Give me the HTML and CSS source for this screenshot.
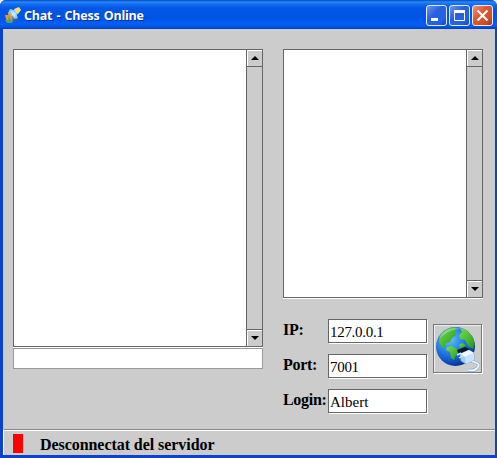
FILE: index.html
```html
<!DOCTYPE html>
<html lang="ca">
<head>
<meta charset="utf-8">
<title>Chat - Chess Online</title>
<link rel="stylesheet" href="styles.css">
</head>
<body>
<div class="window">
  <header class="titlebar">
    <svg class="app-icon" width="18" height="18" viewBox="0 0 18 18">
      <path d="M4 7L6 3l4 1 3-2 2 3-2 4 1 4-3 1-3-4-3 1z" fill="#8bcdf0"/>
      <path d="M10 3l5-2 2 3-3 4-2-2z" fill="#f4df73"/>
      <path d="M7 5l5 2-1 4-3-2z" fill="#c2e7fa"/>
      <path d="M1 9l3 0 1-3 2 3 2 3-2 3-3 1-2-3z" fill="#e8963b"/>
      <path d="M1 14l3 0 1-4 2 4 3-1-2 4-5 0z" fill="#4fa568"/>
      <path d="M10 13l4-1-1 3-3 1z" fill="#375fa8"/>
    </svg>
    <h1 class="title">Chat - Chess Online</h1>
    <div class="controls">
      <button class="control" aria-label="Minimize"><svg width="21" height="21"><path d="M5 14.500h7" stroke="#fff" stroke-width="3"/></svg></button>
      <button class="control" aria-label="Maximize"><svg width="21" height="21"><path d="M5.500 6v9.500h10V6" fill="none" stroke="#fff"/><path d="M5 6.500h11" stroke="#fff" stroke-width="3"/></svg></button>
      <button class="control close" aria-label="Close"><svg width="21" height="21"><path d="M5.500 5.500l10 10m0-10l-10 10" stroke="#fff" stroke-width="2.200"/></svg></button>
    </div>
  </header>
  <main class="content">
    <section class="chat">
      <div class="pane messages">
        <div class="scrollbar">
          <span class="arrow"><svg width="8" height="4"><path d="M4 0L8 4H0z"/></svg></span>
          <span class="arrow down"><svg width="8" height="4"><path d="M0 0h8L4 4z"/></svg></span>
        </div>
      </div>
      <div class="entry"></div>
    </section>
    <section class="side">
      <div class="pane users">
        <div class="scrollbar">
          <span class="arrow"><svg width="8" height="4"><path d="M4 0L8 4H0z"/></svg></span>
          <span class="arrow down"><svg width="8" height="4"><path d="M0 0h8L4 4z"/></svg></span>
        </div>
      </div>
      <div class="connection">
        <div class="fields">
          <span class="label">IP:</span><div class="field digits">127.0.0.1</div>
          <span class="label">Port:</span><div class="field digits">7001</div>
          <span class="label">Login:</span><div class="field">Albert</div>
        </div>
        <button class="connect" aria-label="Connect">
          <svg width="48" height="48" viewBox="0 0 48 48">
            <defs>
              <radialGradient id="sea" cx=".34" cy=".3" r=".72"><stop offset="0" stop-color="#6fc4ff"/><stop offset=".35" stop-color="#3592ee"/><stop offset=".75" stop-color="#145acb"/><stop offset="1" stop-color="#08348f"/></radialGradient>
              <linearGradient id="land" x2="1" y2="1"><stop stop-color="#7cdc50"/><stop offset=".6" stop-color="#45b52f"/><stop offset="1" stop-color="#1f8a25"/></linearGradient>
              <clipPath id="ball"><circle cx="21.500" cy="21.500" r="19.500"/></clipPath>
            </defs>
            <circle cx="21.500" cy="21.500" r="19.500" fill="url(#sea)"/>
            <g clip-path="url(#ball)" fill="url(#land)">
              <path d="M5 16L7 9l7-6 8-2-1 5 1 4-4 3-2 4-5 2 1 3-3 1-3-4z"/>
              <path d="M26 3l6 1 6 6 3 8-2 6-5-3-3-6-5-1-1-4 3-3z"/>
              <path d="M13 22l5-1 5 3 2 3-3 3-2 5-3-2-1-6-4-2z"/>
              <path d="M25 20l3-2 4 2-2 2-4 1z"/>
            </g>
            <path d="M5 14C9 5 18 1 27 4 18 4 11 8 5 14z" fill="#d9f5ff" opacity=".35"/>
            <path d="M23 25l8-3 6 3-5 4-7 1z" fill="#07182a"/>
            <path d="M37 36c7 2 9 3 7 6-2 3-6 4-10 3" fill="none" stroke="#8aaed8" stroke-width="3.200"/>
            <path d="M37 36c7 2 9 3 7 6-2 3-6 4-10 3" fill="none" stroke="#eff7ff" stroke-width="1.800"/>
            <path d="M26 29l9-4 5 3 0 7-8 4-5-3z" fill="#a8cdf2" stroke="#719fd4" stroke-width=".7"/>
            <path d="M26 29l9-4 5 3-9 4z" fill="#edf8ff"/>
            <path d="M31 32l9-4v7l-8 4z" fill="#c9e3fa"/>
            <path d="M23 30l4-2m-2 5l3-2" stroke="#d7ebff" stroke-width="1.500"/>
          </svg>
        </button>
      </div>
    </section>
  </main>
  <footer class="status"><span class="light"></span><span class="status-text">Desconnectat del servidor</span></footer>
</div>
</body>
</html>
```

FILE: styles.css
```css
* { box-sizing: border-box; }
body { margin: 0; background: #f0f0ec; }
.window {
  width: 497px; height: 458px;
  display: flex; flex-direction: column;
  padding: 0 2px 3px 3px;
  background: #0b42ce;
  border-radius: 6px 6px 0 0;
  overflow: hidden;
  font-family: "Liberation Serif", serif;
  color: #000;
}
.titlebar {
  height: 29px; margin: 0 -2px 0 -3px; padding: 5px 4px 0 4px;
  display: flex; align-items: flex-start; flex: none;
  background: linear-gradient(#0647b9 0, #2688fb 2px, #1370f4 4px, #0457e4 8px, #0054e3 18px, #0260fb 24px, #0453dd 27px, #033db0 29px);
}
.app-icon { margin-top: 1px; }
.title {
  margin: 3px 0 0 2px; flex: 1;
  font: bold 13px/16px "Open Sans", sans-serif;
  font-size: 12.5px;
  letter-spacing: -.22px; word-spacing: 1.2px; color: #fff; text-shadow: 1px 1px #0a2e8c;
  white-space: nowrap;
}
.controls { display: flex; gap: 2px; }
.control {
  width: 21px; height: 21px; padding: 0;
  border: 1px solid #e4edff; border-radius: 3px;
  background: linear-gradient(135deg, #7097f3, #2960dd 40%, #2263ea 75%, #1746b5);
}
.control svg { display: block; margin: -1px; }
.close { background: linear-gradient(135deg, #ef947a, #df5731 40%, #d64c21 75%, #a73417); }
.content {
  flex: 1; display: flex; align-items: flex-start; gap: 20px;
  padding: 20px 0 0 10px;
  background: #ccc;
}
.chat { width: 250px; }
.side { width: 200px; }
.pane {
  display: flex; justify-content: flex-end;
  background: #fff; border: 1px solid #666; border-right: 0;
  box-shadow: 0 1px #fff;
}
.messages { height: 298px; }
.users { height: 249px; }
.scrollbar {
  width: 17px; display: flex; flex-direction: column; justify-content: space-between;
  background: #ccc; border: solid #666; border-width: 0 1px;
}
.arrow {
  height: 17px; display: flex; align-items: center; justify-content: center;
  border: solid #666; border-width: 0 0 1px; box-shadow: inset 1px 1px #fff;
}
.down { border-width: 1px 0 0; }
.entry {
  height: 21px; margin-top: 1px;
  background: #fff; border: 1px solid #999;
}
.connection { display: flex; padding-top: 21px; }
.fields {
  display: grid; grid-template-columns: 45px 99px; row-gap: 11px;
}
.label { font: bold 16px/22px "Liberation Serif", serif; letter-spacing: -.3px; white-space: nowrap; }
.field {
  height: 24px; padding: 2px 0 0 1px;
  background: #fff; border: 1px solid #666;
  box-shadow: 1px 1px #fff;
  font-size: 15px; line-height: 20px;
}
.digits { letter-spacing: -.3px; }
.connect {
  width: 49px; height: 49px; flex: none; margin: 5px 0 0 6px; padding: 0;
  background: #ccc; border: 1px solid #777; border-radius: 0;
  box-shadow: 1px 1px #fff, inset 1px 1px #eee;
}
.connect svg { display: block; }
.status {
  height: 26px; flex: none; display: flex; align-items: flex-start;
  padding: 4px 0 0 9px;
  background: #ccc; border-top: 1px solid #888; border-left: 1px solid #fff;
  box-shadow: inset 0 1px #fff;
}
.light { width: 10px; height: 19px; background: #f00; }
.status-text { margin-left: 17px; margin-top: 1px; font-size: 16px; font-weight: bold; line-height: 20px; letter-spacing: -.06px; white-space: nowrap; }
```
